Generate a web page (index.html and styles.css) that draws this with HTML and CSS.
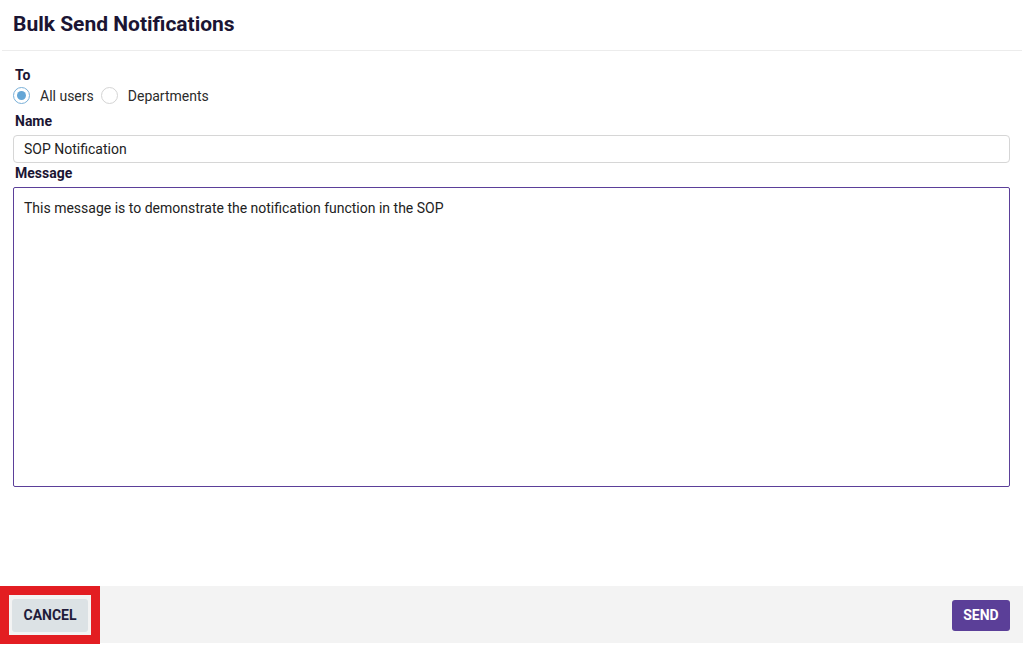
FILE: index.html
```html
<!DOCTYPE html>
<html>
<head>
<meta charset="utf-8">
<link rel="stylesheet" href="styles.css">
</head>
<body>
<div class="dialog">
  <header class="head"><h1>Bulk Send Notifications</h1></header>
  <main class="form">
    <div class="label">To</div>
    <div class="radios">
      <label class="radio"><span class="dot on"></span>All users</label>
      <label class="radio"><span class="dot"></span>Departments</label>
    </div>
    <div class="label">Name</div>
    <div class="input">SOP Notification</div>
    <div class="label">Message</div>
    <div class="textarea">This message is to demonstrate the notification function in the SOP</div>
  </main>
  <footer class="foot">
    <button class="btn cancel">CANCEL</button>
    <button class="btn send">SEND</button>
    <div class="mark"></div>
  </footer>
</div>
</body>
</html>
```

FILE: styles.css
```css
html, body { margin: 0; padding: 0; background: #fff; }
body { font-family: Roboto, "Liberation Sans", sans-serif; color: #1f1d2e; }
.dialog { height: 645px; display: flex; flex-direction: column; }
.head { height: 48px; margin: 0 1px 0 2px; border-bottom: 1px solid #ececec; box-sizing: content-box; display: flex; align-items: center; padding: 0 11px 2px 11px; }
.head h1 { margin: 0; font-size: 21px; font-weight: 700; color: #1b1533; }
.form { padding: 16px 13px 0 13px; flex: 1; }
.label { font-size: 14px; font-weight: 700; line-height: 16px; color: #1b1533; margin-left: 2px; }
.radios { display: flex; height: 17px; margin: 4px 0 9px 0; align-items: center; }
.radio { display: flex; align-items: center; font-size: 14px; color: #2b2b2b; margin-right: 7px; }
.dot { width: 15px; height: 15px; border: 1px solid #d4d4d4; border-radius: 50%; margin-right: 10px; box-sizing: content-box; display: flex; align-items: center; justify-content: center; }
.dot.on { border-color: #7ab0d8; }
.dot.on::after { content: ""; width: 9px; height: 9px; border-radius: 50%; background: #64a6d6; }
.input { margin: 6px 0 2px 0; height: 26px; border: 1px solid #d6d6d6; border-radius: 4px; font-size: 14px; line-height: 26px; padding: 0 10px; color: #222; }
.textarea { margin-top: 6px; height: 278px; border: 1px solid #5b3f99; border-radius: 2px; font-size: 14px; line-height: 18px; padding: 11px 10px 9px 10px; color: #222; }
.foot { position: relative; height: 57px; margin-bottom: 2px; background: #f3f3f3; display: flex; align-items: center; justify-content: space-between; padding: 0 13px 0 12px; }
.btn { border: none; font-family: Roboto, "Liberation Sans", sans-serif; font-weight: 700; font-size: 14px; border-radius: 3px; cursor: pointer; }
.cancel { background: #dce2e5; color: #1f1b3a; width: 76px; height: 33px; margin-top: 1px; }
.send { background: #5b3f98; color: #fff; width: 58px; height: 31px; margin-top: 1px; }
.mark { position: absolute; left: 0; top: 0; width: 100px; height: 58px; border: 9px solid #e31d22; box-sizing: border-box; pointer-events: none; }
```
